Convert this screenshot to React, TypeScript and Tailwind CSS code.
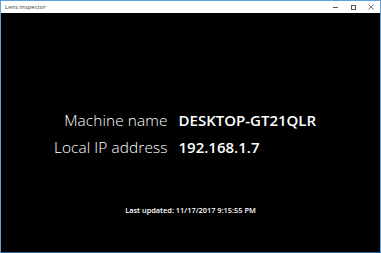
const TitleBar = () => {
  return (
    <div className="h-[12px] bg-white flex items-center justify-between">
      <span className="pl-[4px] text-[6px] text-[#444] leading-none">Lens inspector</span>
      <div className="flex h-full items-center text-[#333]">
        <div className="w-[18px] flex justify-center">
          <div className="w-[5px] h-px bg-[#555]"></div>
        </div>
        <div className="w-[18px] flex justify-center">
          <div className="w-[5px] h-[5px] border border-[#555]"></div>
        </div>
        <div className="w-[18px] flex justify-center">
          <svg width="6" height="6" viewBox="0 0 6 6">
            <path d="M0.5 0.5L5.5 5.5M5.5 0.5L0.5 5.5" stroke="#555" strokeWidth="0.8" />
          </svg>
        </div>
      </div>
    </div>
  )
}

const App = () => {
  return (
    <div className="w-[381px] h-[253px] border border-[#5fa0d8] border-b-[#2a6496] flex flex-col font-['Open_Sans',sans-serif]">
      <TitleBar />
      <div className="flex-1 bg-black text-white flex flex-col items-center">
        <div className="mt-[94px] mr-[11px] grid grid-cols-[auto_auto] gap-x-[11px] items-baseline text-[15px] leading-[26px]">
          <div className="text-right font-light text-[15.4px] tracking-[0.1px]">Machine name</div>
          <div className="font-semibold">DESKTOP-GT21QLR</div>
          <div className="text-right font-light text-[15.4px] tracking-[0.1px]">Local IP address</div>
          <div className="font-semibold">192.168.1.7</div>
        </div>
        <div className="mt-[44px] text-[7.4px] leading-[10px] font-semibold">Last updated: 11/17/2017 9:15:55 PM</div>
      </div>
    </div>
  )
}

export default App
